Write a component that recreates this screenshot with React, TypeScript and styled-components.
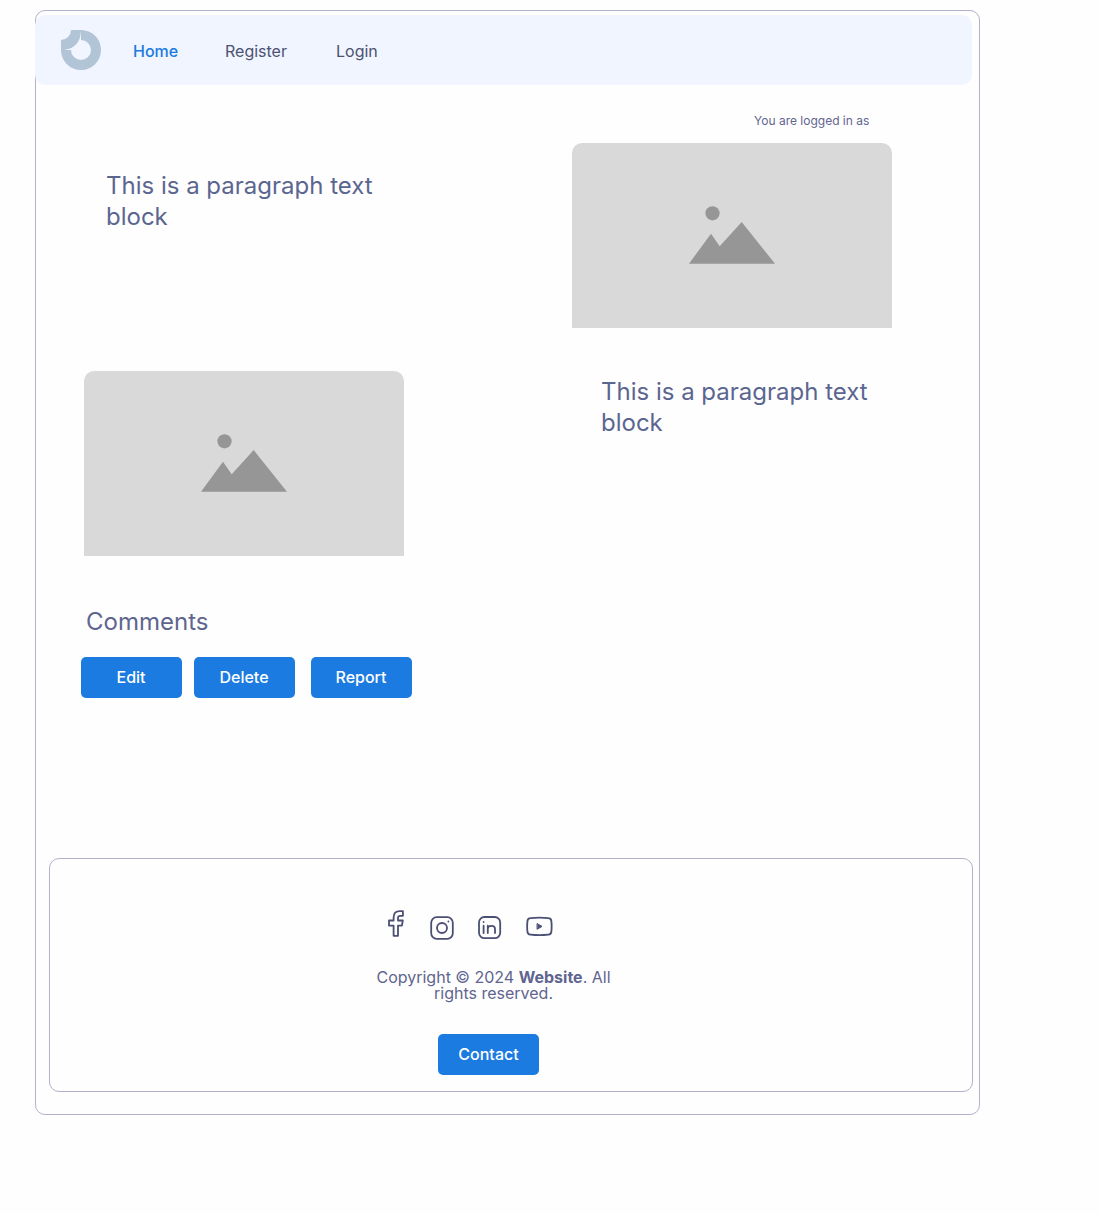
import React from "react";
import styled, { createGlobalStyle } from "styled-components";

const GlobalStyle = createGlobalStyle`
  * { box-sizing: border-box; }
  body { margin: 0; background: #fefefe; font-family: Inter, "Liberation Sans", sans-serif; }
`;

const Frame = styled.div`
  display: flex;
  flex-direction: column;
  width: 945px;
  height: 1105px;
  margin: 10px 0 0 35px;
  padding-top: 4px;
  border: 1px solid #b1b1cb;
  border-radius: 10px;
`;

const Nav = styled.nav`
  display: flex;
  align-items: center;
  width: 937px;
  height: 70px;
  margin-left: -1px;
  padding-left: 26px;
  background: #f0f5ff;
  border-radius: 10px;
`;

const Logo = styled.svg`
  width: 40px;
  height: 40px;
  margin-right: 32px;
`;

const NavLink = styled.a<{ $active?: boolean; $width: number }>`
  width: ${(p) => p.$width}px;
  padding-top: 2px;
  font-size: 16px;
  line-height: 20px;
  font-weight: ${(p) => (p.$active ? 500 : 400)};
  color: ${(p) => (p.$active ? "#1b7be0" : "#4b5272")};
`;

const Columns = styled.main`
  display: grid;
  grid-template-columns: 488px 320px;
  height: 773px;
  padding-left: 48px;
`;

const Column = styled.section<{ $top: number }>`
  display: flex;
  flex-direction: column;
  align-items: flex-start;
  padding-top: ${(p) => p.$top}px;
`;

const Paragraph = styled.p<{ $indent: number; $height: number }>`
  width: 300px;
  height: ${(p) => p.$height}px;
  margin: 0 0 0 ${(p) => p.$indent}px;
  font-size: 24px;
  line-height: 31px;
  color: #5b6690;
`;

const Status = styled.p`
  margin: 0 0 14px 182px;
  font-size: 12px;
  line-height: 16px;
  color: #62658f;
`;

const Picture = styled.div<{ $gap: number }>`
  display: flex;
  align-items: center;
  justify-content: center;
  width: 320px;
  height: 185px;
  margin-bottom: ${(p) => p.$gap}px;
  padding-bottom: 1px;
  background: #d9d9d9;
  border-radius: 10px 10px 0 0;
`;

const Heading = styled.h2`
  margin: 0 0 20px 2px;
  font-size: 24px;
  font-weight: 400;
  line-height: 31px;
  color: #5f658f;
`;

const Actions = styled.div`
  display: flex;
  margin-left: -3px;
`;

const Button = styled.button<{ $gap?: number; $nudge?: number }>`
  width: 101px;
  height: 41px;
  margin: 0 ${(p) => p.$gap ?? 0}px 0 0;
  padding: 0 ${(p) => p.$nudge ?? 0}px 0 0;
  border: 0;
  border-radius: 5px;
  background: #1b7be0;
  color: #fff;
  font: 500 16px/41px Inter, "Liberation Sans", sans-serif;
`;

const Footer = styled.footer`
  display: flex;
  flex-direction: column;
  width: 924px;
  height: 234px;
  margin-left: 13px;
  padding: 50px 0 0 326px;
  border: 1px solid #b1b1cb;
  border-radius: 10px;
`;

const Socials = styled.div`
  display: flex;
  height: 34px;
  padding-left: 11px;
`;

const Icon = styled.svg<{ $top: number; $gap: number }>`
  flex: none;
  margin: ${(p) => p.$top}px ${(p) => p.$gap}px 0 0;
  fill: none;
  stroke: #4b4f73;
  stroke-width: 1.8;
  stroke-linecap: round;
  stroke-linejoin: round;
`;

const Copyright = styled.p`
  width: 235px;
  margin: 26px 0 33px;
  font-size: 16px;
  line-height: 16px;
  text-align: center;
  color: #5f658f;
`;

const ContactRow = styled.div`
  padding-left: 62px;
`;

function Placeholder({ gap }: { gap: number }) {
  return (
    <Picture $gap={gap}>
      <svg width="86" height="58" viewBox="0 0 86 58" fill="#969696">
        <circle cx="23.5" cy="7.3" r="7.1" />
        <path d="M0 57.7 22 27.7 30.7 40.3 52.7 16 86 57.7Z" />
      </svg>
    </Picture>
  );
}

export default function App() {
  return (
    <>
      <GlobalStyle />
      <Frame>
        <Nav>
          <Logo viewBox="0 0 40 40" fill="#b1c5d6">
            <path d="M10 0H20A20 20 0 1 1 0 20V10A10 10 0 0 0 10 0Z" />
            <path
              fill="#f0f5ff"
              d="M19.7 2.5C19.5 12 12.5 19.3 4.5 19.5V20H10A10 10 0 1 0 20 10V2.5Z"
            />
          </Logo>
          <NavLink $active $width={92}>Home</NavLink>
          <NavLink $width={111}>Register</NavLink>
          <NavLink $width={60}>Login</NavLink>
        </Nav>
        <Columns>
          <Column $top={85}>
            <Paragraph $indent={22} $height={201}>This is a paragraph text block</Paragraph>
            <Placeholder gap={50} />
            <Heading>Comments</Heading>
            <Actions>
              <Button $gap={12} $nudge={1}>Edit</Button>
              <Button $gap={16} $nudge={1}>Delete</Button>
              <Button $nudge={1}>Report</Button>
            </Actions>
          </Column>
          <Column $top={28}>
            <Status>You are logged in as</Status>
            <Placeholder gap={48} />
            <Paragraph $indent={29} $height={62}>This is a paragraph text block</Paragraph>
          </Column>
        </Columns>
        <Footer>
          <Socials>
            <Icon $top={0} $gap={26} width="17" height="29" viewBox="0 0 17 29">
              <path d="M15.9 2.2H13Q6.6 2.2 6.6 8.5V11.5H2V16.6H6.6V26.8H11V16.6H14.9L15.8 11.5H11V9Q11 6.8 13.2 6.8H15.9Z" />
            </Icon>
            <Icon $top={7} $gap={24} width="24" height="24" viewBox="0 0 24 24">
              <rect x="1.2" y="1.2" width="21.6" height="21.6" rx="5.5" />
              <circle cx="12" cy="12" r="5" />
              <path d="M18.4 5.5v.1" />
            </Icon>
            <Icon $top={7} $gap={24} width="24" height="24" viewBox="0 0 24 24">
              <rect x="1" y="1" width="21.2" height="21.2" rx="5.5" />
              <path d="M5.6 9.7V17M5.6 6v.1M9.8 9.7V17M9.8 13Q9.8 9.8 13.4 9.8T17 13V17" />
            </Icon>
            <Icon $top={7} $gap={0} width="28" height="21" viewBox="0.6 -0.4 28 21">
              <path d="M5 1.8Q14 .8 23 1.8Q26 2 26 5.2Q26.5 10 26 14.8Q26 18 23 18.2Q14 19.2 5 18.2Q2 18 2 14.8Q1.5 10 2 5.2Q2 2 5 1.8Z" />
              <path fill="#4b4f73" strokeWidth="1" d="M12 7.3 16.6 10 12 12.7Z" />
            </Icon>
          </Socials>
          <Copyright>
            Copyright © 2024 <b>Website</b>. All rights reserved.
          </Copyright>
          <ContactRow>
            <Button>Contact</Button>
          </ContactRow>
        </Footer>
      </Frame>
    </>
  );
}
